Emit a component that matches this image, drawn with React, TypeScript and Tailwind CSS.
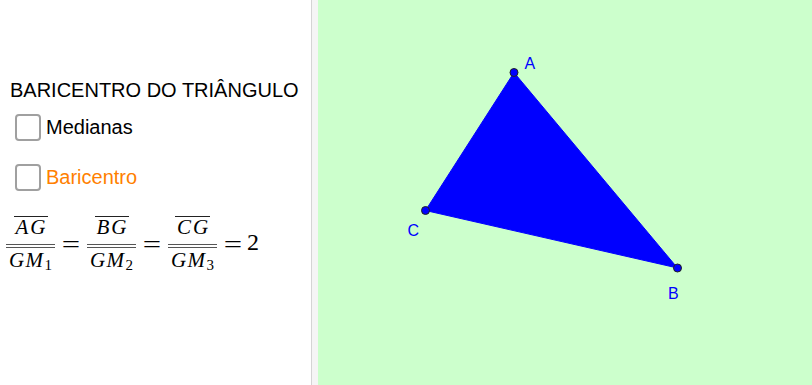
import React from "react";

const serif = { fontFamily: '"Liberation Serif", "Times New Roman", serif' };

function Frac({ num, den, sub }: { num: string; den: string; sub: string }) {
  return (
    <span className="flex flex-col items-center w-[49px] shrink-0">
      <span className="block italic leading-[21px] h-[21px] border-t border-[#222] text-[21px] tracking-[2px] pl-[2px] box-content">{num}</span>
      <span className="block w-full h-[4px] border-y border-[#555] mt-[6px]" />
      <span className="block italic leading-[21px] h-[21px] text-[21px] tracking-[1.5px] mt-[2px] whitespace-nowrap">
        {den}
        <span className="relative top-[3px] not-italic text-[15px] tracking-normal">{sub}</span>
      </span>
    </span>
  );
}

function Eq() {
  return <span className="block w-[16px] shrink-0 text-center text-[26px] leading-[26px] mt-[16px] scale-x-[1.25]">=</span>;
}

export default function App() {
  return (
    <div className="flex w-[812px] h-[385px] overflow-hidden bg-white" style={{ fontFamily: '"Liberation Sans", Arial, sans-serif' }}>
      <div className="w-[311px] shrink-0 bg-white pt-[79px] pl-[10px]">
        <div className="text-[20px] leading-[23px] text-black whitespace-nowrap">BARICENTRO DO TRIÂNGULO</div>
        <div className="flex items-center mt-[12px] ml-[5px] h-[27px]">
          <span className="w-[26px] h-[27px] rounded-[4px] border-2 border-[#a0a0a0] bg-white" />
          <span className="ml-[5px] text-[20px] leading-[23px] text-black">Medianas</span>
        </div>
        <div className="flex items-center mt-[23px] ml-[5px] h-[27px]">
          <span className="w-[26px] h-[27px] rounded-[4px] border-2 border-[#a0a0a0] bg-white" />
          <span className="ml-[5px] text-[20px] leading-[23px] text-[#ff7f00]">Baricentro</span>
        </div>
        <div className="flex items-start gap-[8px] mt-[25px] -ml-[4px] text-black" style={serif}>
          <Frac num="AG" den="GM" sub="1" />
          <Eq />
          <Frac num="BG" den="GM" sub="2" />
          <Eq />
          <Frac num="CG" den="GM" sub="3" />
          <Eq />
          <span className="block text-[24px] leading-[24px] mt-[14px] -ml-[2px]">2</span>
        </div>
      </div>
      <div className="w-px shrink-0 bg-[#d4d4d4]" />
      <div className="w-[6px] shrink-0 bg-[#f5f5f5]" />
      <div className="flex-1 bg-[#ccffcc] relative">
        <svg className="absolute inset-0" width="494" height="385" viewBox="318 0 494 385">
          <polygon points="514,72.5 677.5,268 425.5,210.5" fill="#0000ff" stroke="#0000ff" strokeWidth="1" />
          <circle cx="514" cy="72.5" r="4" fill="#0000ff" stroke="#222" strokeWidth="1" />
          <circle cx="677.5" cy="268" r="4" fill="#0000ff" stroke="#222" strokeWidth="1" />
          <circle cx="425.5" cy="210.5" r="4" fill="#0000ff" stroke="#222" strokeWidth="1" />
          <text x="524.5" y="69" fill="#0000ff" fontSize="16" fontFamily="Liberation Sans, Arial, sans-serif">A</text>
          <text x="407.5" y="236" fill="#0000ff" fontSize="16" fontFamily="Liberation Sans, Arial, sans-serif">C</text>
          <text x="668" y="299" fill="#0000ff" fontSize="16" fontFamily="Liberation Sans, Arial, sans-serif">B</text>
        </svg>
      </div>
    </div>
  );
}
